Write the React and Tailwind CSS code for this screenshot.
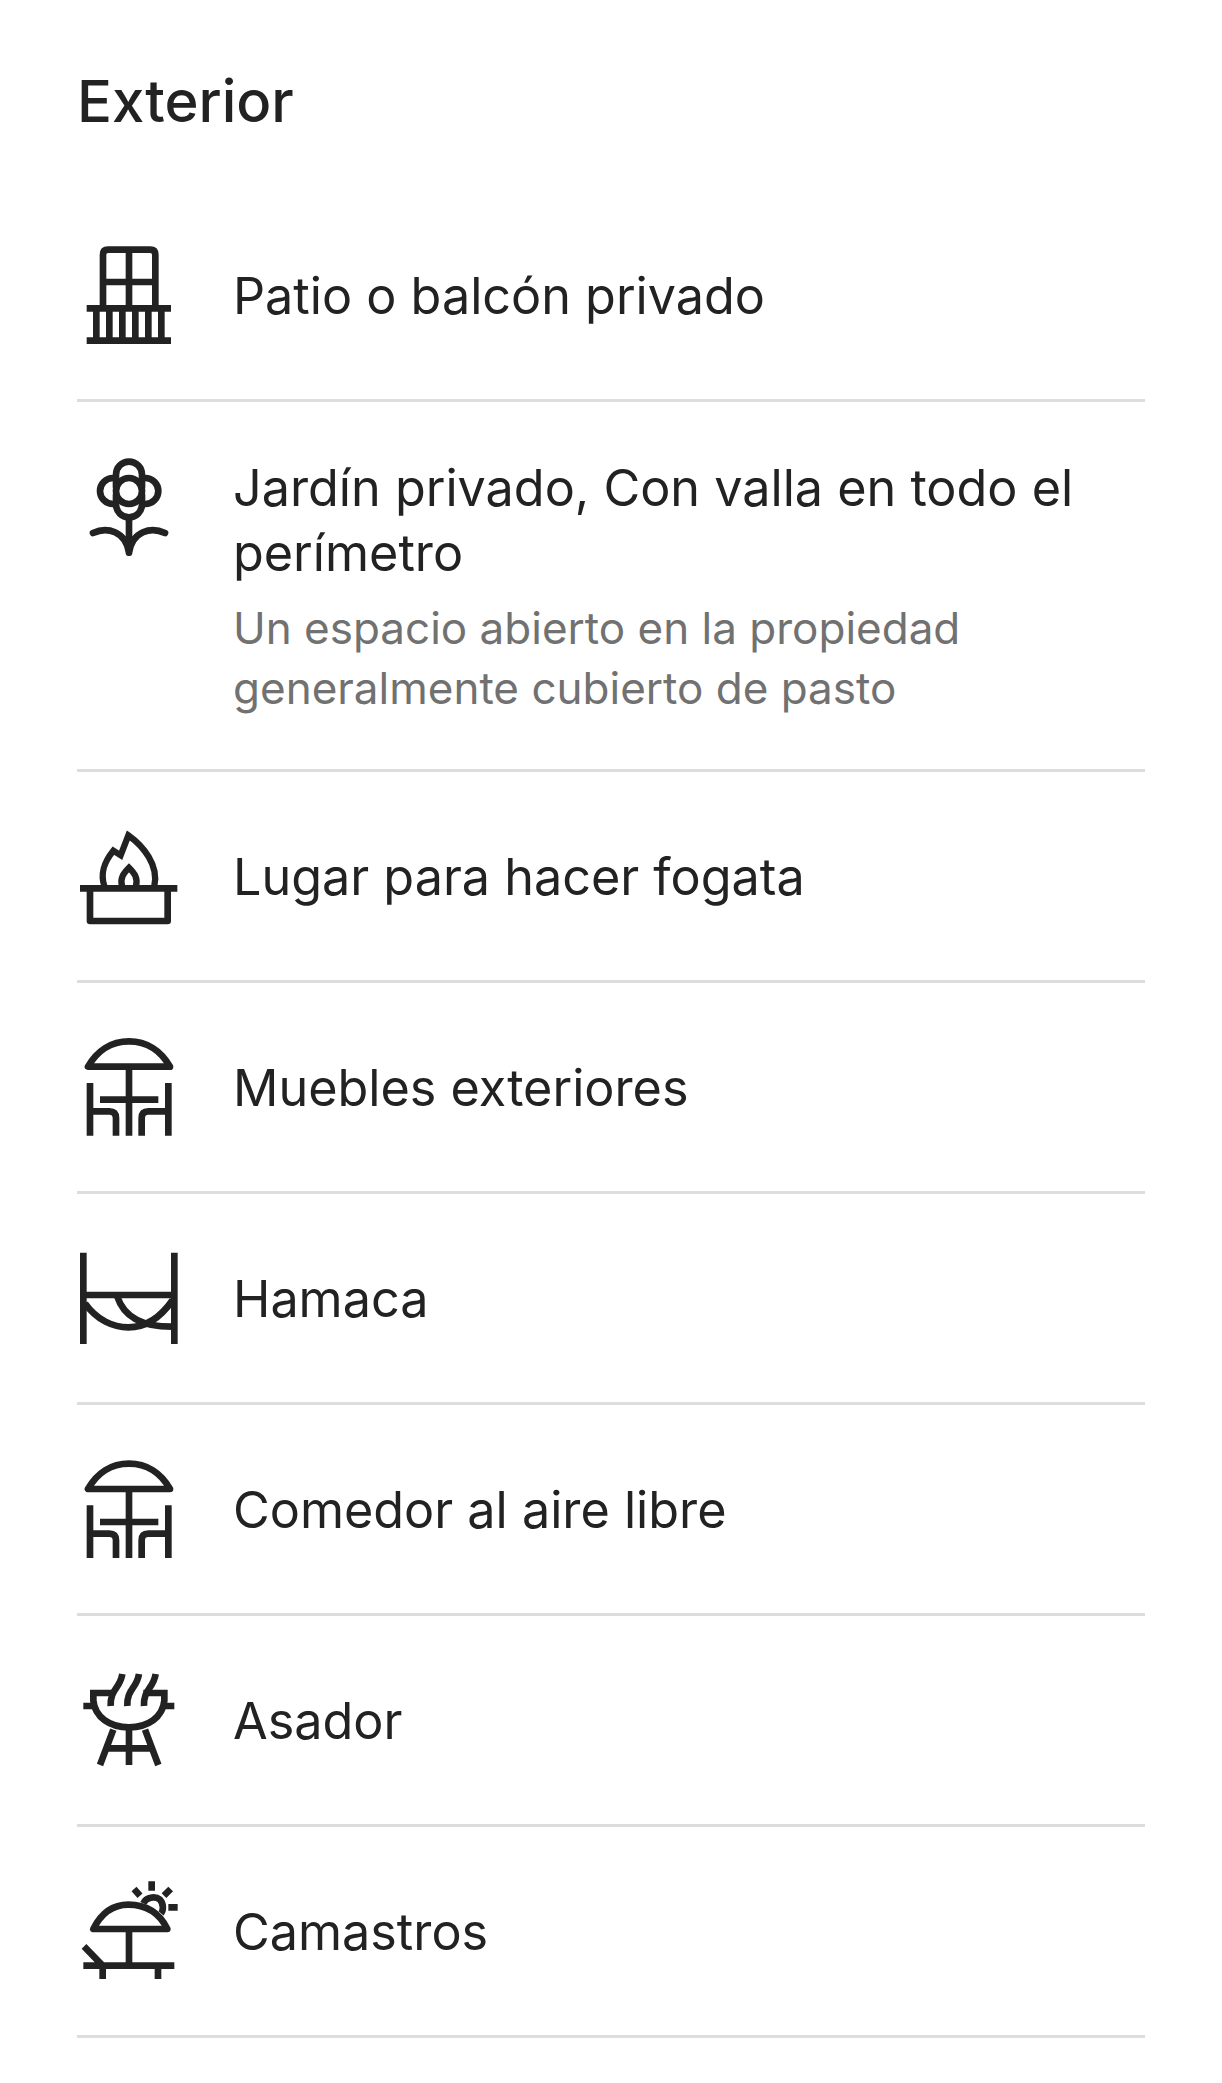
import React from 'react';

const Icon = ({ y, children }) => (
  <svg
    viewBox={`51 ${y} 312 312`}
    className="w-[104px] h-[104px] shrink-0"
    fill="none"
    stroke="#222222"
    strokeWidth="20"
  >
    {children}
  </svg>
);

const Balcony = () => (
  <Icon y={69}>
    <path d="M129 255V104q0-15 15-15h127q15 0 15 15v151M207 89v166M129 186h157" />
    <path d="M80 265h253M80 362h253M109 265v97M148 265v97M187 265v97M226 265v97M265 265v97M304 265v97" />
  </Icon>
);

const Flower = () => (
  <Icon y={42}>
    <circle cx="207" cy="150" r="39" />
    <path d="M168 140v-39a39 39 0 0 1 78 0v39M168 160v30a39 39 0 0 0 78 0v-30" />
    <path d="M170 111h-11a39 39 0 0 0 0 78h11M244 111h12a39 39 0 0 1 0 78h-12" />
    <path d="M207 235v100M99 276c42-20 98-6 108 59M315 276c-42-20-98-6-108 59" strokeLinecap="round" />
  </Icon>
);

const Fire = () => (
  <Icon y={44}>
    <path d="M60 237h292M90 237v98h233v-98" strokeLinejoin="round" />
    <path d="M133 230c-14-42 2-75 27-106l22 14 23-60c45 32 92 90 78 152" strokeWidth="19" />
    <path d="M186 230c-6-24 4-38 21-55 17 17 27 31 21 55" strokeWidth="19" />
  </Icon>
);

const Umbrella = ({ y }) => (
  <Icon y={y}>
    <path d="M85 141h245c-27-48-70-76-123-76s-96 28-123 76z" strokeLinejoin="round" />
    <path d="M207 141v207M120 240h175M90 190v158M90 275h58q20 0 20 20v53M325 190v158M325 275h-60q-20 0-20 20v53" />
  </Icon>
);

const Hammock = () => (
  <Icon y={18}>
    <path d="M70 38v274M343 38v274M70 165h273" />
    <path d="M75 190c35 50 85 72 130 72 50 0 95-27 133-82M172 170c18 55 68 90 163 90" />
  </Icon>
);

const Grill = () => (
  <Icon y={27}>
    <path d="M165 102h-65v23c5 50 50 80 107 80s101-30 106-80v-23h-63M70 141h35M310 141h33" />
    <path d="M187 45c-7 45-37 45-35 96M237 45c-7 45-37 45-35 96M287 45c-7 45-37 45-35 96" />
    <path d="M160 212l-40 106M255 212l40 106M207 205v113M145 268h125" />
  </Icon>
);

const Lounger = () => (
  <Icon y={30}>
    <path d="M100 180h222c-27-55-72-73-117-73s-80 23-105 73z" strokeLinejoin="round" />
    <path d="M207 180v110M70 290h273M128 290v40M294 290v40M72 232l56 58" />
    <path d="M250 103c8-18 35-23 50-11 12 13 10 33 3 41M275 37v28M222 60l18 20M332 60l-20 20M325 115h28" />
  </Icon>
);

const amenities = [
  { icon: <Balcony />, title: 'Patio o balcón privado' },
  {
    icon: <Flower />,
    title: 'Jardín privado, Con valla en todo el perímetro',
    subtitle: 'Un espacio abierto en la propiedad generalmente cubierto de pasto',
  },
  { icon: <Fire />, title: 'Lugar para hacer fogata' },
  { icon: <Umbrella y={46} />, title: 'Muebles exteriores' },
  { icon: <Hammock />, title: 'Hamaca' },
  { icon: <Umbrella y={45} />, title: 'Comedor al aire libre' },
  { icon: <Grill />, title: 'Asador' },
  { icon: <Lounger />, title: 'Camastros' },
];

const App = () => {
  return (
    <div className="w-[1222px] h-[2083px] bg-white px-[77px] text-[#222222] font-['Inter','Liberation_Sans',sans-serif] overflow-hidden">
      <h2 className="pt-[67px] pb-[55px] text-[58px] leading-[69px] font-medium">Exterior</h2>
      {amenities.map((item) => (
        <div
          key={item.title}
          className={`flex gap-[52px] border-b-[3px] border-[#dddddd] ${item.subtitle ? 'items-start pt-[53px] pb-[51px]' : 'items-center py-[52px]'}`}
        >
          {item.icon}
          <div className="flex-1">
            <div className="text-[50.3px] leading-[65px]">{item.title}</div>
            {item.subtitle && (
              <div className="mt-[13px] text-[44px] leading-[60px] text-[#717171]">{item.subtitle}</div>
            )}
          </div>
        </div>
      ))}
    </div>
  );
};

export default App;
